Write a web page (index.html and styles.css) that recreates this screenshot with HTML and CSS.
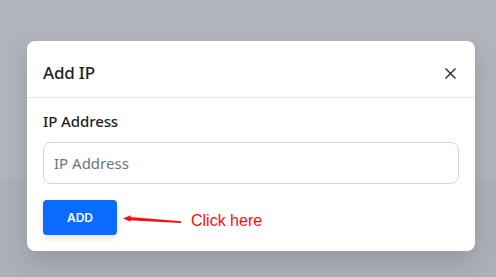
FILE: index.html
```html
<!DOCTYPE html>
<html lang="en">
<head>
<meta charset="utf-8">
<title>Add IP</title>
<link rel="stylesheet" href="styles.css">
</head>
<body>
<div class="backdrop">
  <div class="modal">
    <div class="modal-header">
      <h2 class="modal-title">Add IP</h2>
      <button class="close" aria-label="Close">
        <svg width="11" height="11" viewBox="0 0 11 11"><path d="M0.5 0.5 L10.5 10.5 M10.5 0.5 L0.5 10.5" stroke="#1f2328" stroke-width="1.3" fill="none"/></svg>
      </button>
    </div>
    <div class="modal-body">
      <label class="label" for="ip">IP Address</label>
      <input class="input" id="ip" type="text" placeholder="IP Address">
      <button class="btn">ADD</button>
    </div>
  </div>
</div>
<svg class="arrow" width="64" height="14" viewBox="0 0 64 14">
  <polygon points="3,6.5 10.5,3.3 10.5,9.7" fill="#ff0a0a"/>
  <polygon points="9,5.1 61,9.2 61,11 9,8.3" fill="#ff0a0a"/>
</svg>
<div class="note">Click here</div>
</body>
</html>
```
FILE: styles.css
```css
html, body {
  margin: 0;
  padding: 0;
}
body {
  width: 496px;
  height: 277px;
  overflow: hidden;
  background: linear-gradient(#b1b4bc 0, #b1b4bc 178px, #adb0b8 178px, #adb0b8 100%);
  font-family: "Noto Sans", "DejaVu Sans", sans-serif;
  position: relative;
}
.backdrop {
  padding: 41px 0 0 27px;
}
.modal {
  width: 448px;
  background: #fff;
  border-radius: 8px;
  box-shadow: 0 10px 22px rgba(40, 44, 55, 0.18);
}
.modal-header {
  display: flex;
  align-items: center;
  justify-content: space-between;
  padding: 20px 16px 12px 16px;
  border-bottom: 1px solid #e1e3e7;
}
.modal-title {
  margin: 0;
  font-size: 17px;
  line-height: 24px;
  font-weight: 500;
  color: #1c1f24;
  letter-spacing: -0.2px;
}
.close {
  border: 0;
  background: none;
  padding: 0;
  margin-right: 3px;
  width: 11px;
  height: 11px;
  display: flex;
}
.modal-body {
  padding: 12px 16px 16px 16px;
}
.label {
  display: block;
  font-size: 15px;
  line-height: 22px;
  font-weight: 500;
  color: #1c1f24;
  margin-bottom: 10px;
  letter-spacing: -0.1px;
}
.input {
  display: block;
  box-sizing: border-box;
  width: 100%;
  height: 42px;
  border: 1px solid #d3d6dc;
  border-radius: 8px;
  padding: 0 10px;
  font-family: "Noto Sans", "DejaVu Sans", sans-serif;
  font-size: 15px;
  color: #212529;
  outline: none;
}
.input::placeholder {
  color: #6f747c;
}
.btn {
  display: block;
  margin-top: 16px;
  width: 74px;
  height: 35px;
  border: 0;
  border-radius: 4px;
  background: #0a6cff;
  color: #fff;
  font-family: Inter, Roboto, "Liberation Sans", sans-serif;
  font-weight: 600;
  font-size: 12px;
  box-shadow: 0 3px 6px rgba(0, 0, 0, 0.12);
}
.arrow {
  position: absolute;
  left: 120px;
  top: 212px;
}
.note {
  position: absolute;
  left: 191px;
  top: 212px;
  font-family: "Liberation Sans", Arial, sans-serif;
  font-size: 16px;
  line-height: 18px;
  color: #ff0a0a;
}
```
